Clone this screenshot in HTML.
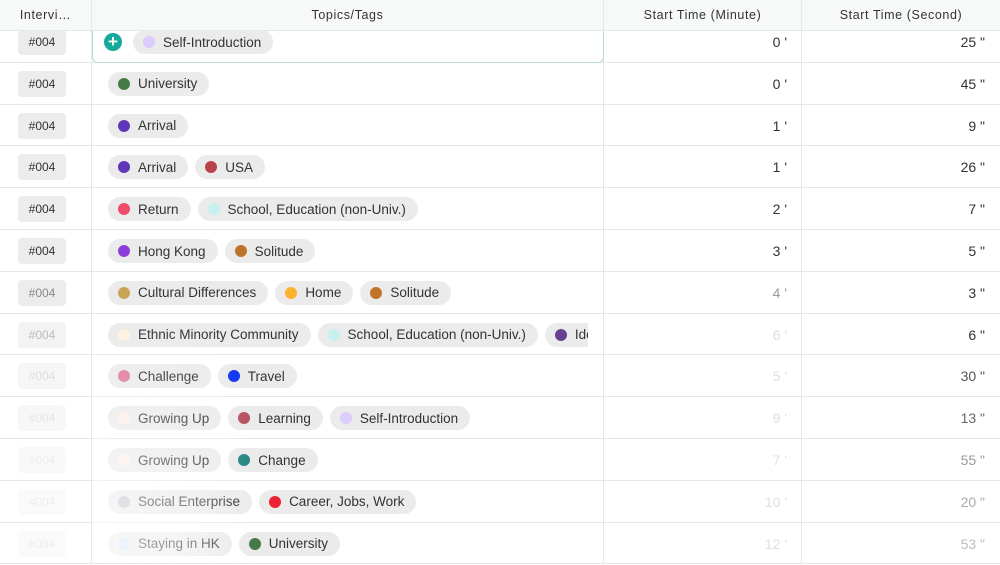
<!DOCTYPE html>
<html><head><meta charset="utf-8"><style>
*{box-sizing:border-box;margin:0;padding:0}
body{width:1000px;height:563px;overflow:hidden;background:#fff;font-family:"Liberation Sans",sans-serif;color:#333;position:relative}
.hdr{position:absolute;left:0;top:0;width:1000px;height:31px;background:#f7f8f8;border-bottom:1px solid #e3e8e8;z-index:5}
.hdr div{position:absolute;top:0;height:30px;line-height:30px;font-size:12.5px;letter-spacing:0.6px;color:#333;text-align:center;border-right:1px solid #e3e8e8}
.row{position:absolute;left:0;width:1000px;height:41.8px;border-bottom:1px solid #e3e8e8}
.vl{position:absolute;top:0;bottom:0;width:1px;background:#e3e8e8;z-index:4}
.id{position:absolute;left:18px;top:8px;width:48px;height:26px;border-radius:4px;background:#ececec;font-size:12px;line-height:26px;text-align:center;color:#333}
.tags{position:absolute;left:108px;top:9px;width:480px;height:24px;display:flex;gap:7px;overflow:hidden;white-space:nowrap}
.chip{height:24px;border-radius:12px;background:#ebebeb;display:flex;align-items:center;padding:0 12px 0 10px;font-size:13.5px;color:#333;flex-shrink:0}
.dot{width:12px;height:12px;border-radius:50%;margin-right:8px}
.min{position:absolute;left:604px;width:183px;top:1px;height:41px;line-height:41px;text-align:right;font-size:14px}
.sec{position:absolute;left:802px;width:183px;top:1px;height:41px;line-height:41px;text-align:right;font-size:14px}
.fade{position:absolute;left:93px;top:320px;width:160px;height:243px;z-index:3;background:linear-gradient(to right,rgba(255,255,255,0.65),rgba(255,255,255,0.45) 60%,rgba(255,255,255,0));-webkit-mask-image:linear-gradient(to bottom,transparent 0%,#000 90%);mask-image:linear-gradient(to bottom,transparent 0%,#000 90%)}
</style></head><body>
<div class="hdr">
<div style="left:0;width:92px">Intervi…</div>
<div style="left:92px;width:512px">Topics/Tags</div>
<div style="left:604px;width:198px">Start Time (Minute)</div>
<div style="left:802px;width:198px;border-right:none">Start Time (Second)</div>
</div>
<div class="vl" style="left:91px"></div><div class="vl" style="left:603px"></div><div class="vl" style="left:801px"></div>

<div class="row" style="top:21px">
<div class="id">#004</div>
<div style="position:absolute;left:92px;top:0;width:512px;height:42px;border:1px solid #b9dcd8;border-radius:0 0 6px 6px;border-top:none;z-index:4"></div>
<div style="position:absolute;left:104px;top:12px;width:18px;height:18px;border-radius:50%;background:#17aa9c;color:#fff;font-size:17px;line-height:18px;text-align:center;font-weight:bold;z-index:5">+</div>
<div class="tags" style="left:133px"><span class="chip"><span class="dot" style="background:#dcccfb"></span>Self-Introduction</span></div>
<div class="min">0 '</div><div class="sec">25 "</div></div>

<div class="row" style="top:62.8px"><div class="id">#004</div>
<div class="tags"><span class="chip"><span class="dot" style="background:#437a45"></span>University</span></div>
<div class="min">0 '</div><div class="sec">45 "</div></div>

<div class="row" style="top:104.6px"><div class="id">#004</div>
<div class="tags"><span class="chip"><span class="dot" style="background:#6135b8"></span>Arrival</span></div>
<div class="min">1 '</div><div class="sec">9 "</div></div>

<div class="row" style="top:146.4px"><div class="id">#004</div>
<div class="tags"><span class="chip"><span class="dot" style="background:#6135b8"></span>Arrival</span><span class="chip"><span class="dot" style="background:#b8434a"></span>USA</span></div>
<div class="min">1 '</div><div class="sec">26 "</div></div>

<div class="row" style="top:188.2px"><div class="id">#004</div>
<div class="tags"><span class="chip"><span class="dot" style="background:#ef4c6a"></span>Return</span><span class="chip"><span class="dot" style="background:#c8f0ee"></span>School, Education (non-Univ.)</span></div>
<div class="min">2 '</div><div class="sec">7 "</div></div>

<div class="row" style="top:230px"><div class="id">#004</div>
<div class="tags"><span class="chip"><span class="dot" style="background:#8e3ed8"></span>Hong Kong</span><span class="chip"><span class="dot" style="background:#c0742a"></span>Solitude</span></div>
<div class="min">3 '</div><div class="sec">5 "</div></div>

<div class="row" style="top:271.8px"><div class="id" style="color:#888">#004</div>
<div class="tags"><span class="chip"><span class="dot" style="background:#c9a456"></span>Cultural Differences</span><span class="chip"><span class="dot" style="background:#fbb22c"></span>Home</span><span class="chip"><span class="dot" style="background:#c0742a"></span>Solitude</span></div>
<div class="min" style="color:#999">4 '</div><div class="sec">3 "</div></div>

<div class="row" style="top:313.6px"><div class="id" style="color:#bbb;background:#f3f3f3">#004</div>
<div class="tags"><span class="chip"><span class="dot" style="background:#fdf3df"></span>Ethnic Minority Community</span><span class="chip"><span class="dot" style="background:#c8f0ee"></span>School, Education (non-Univ.)</span><span class="chip"><span class="dot" style="background:#65418f"></span>Identity</span></div>
<div class="min" style="color:#ddd">6 '</div><div class="sec">6 "</div></div>

<div class="row" style="top:355.4px"><div class="id" style="color:#ddd;background:#f6f6f6">#004</div>
<div class="tags"><span class="chip"><span class="dot" style="background:#e07aa0"></span>Challenge</span><span class="chip"><span class="dot" style="background:#0f33f5"></span>Travel</span></div>
<div class="min" style="color:#e0e0e0">5 '</div><div class="sec" style="color:#555">30 "</div></div>

<div class="row" style="top:397.2px"><div class="id" style="color:#e6e6e6;background:#f7f7f7">#004</div>
<div class="tags"><span class="chip"><span class="dot" style="background:#fdeee6"></span>Growing Up</span><span class="chip"><span class="dot" style="background:#b65060"></span>Learning</span><span class="chip"><span class="dot" style="background:#dcccfb"></span>Self-Introduction</span></div>
<div class="min" style="color:#e0e0e0">9 '</div><div class="sec" style="color:#666">13 "</div></div>

<div class="row" style="top:439px"><div class="id" style="color:#eee;background:#f9f9f9">#004</div>
<div class="tags"><span class="chip"><span class="dot" style="background:#fdeee6"></span>Growing Up</span><span class="chip"><span class="dot" style="background:#208680"></span>Change</span></div>
<div class="min" style="color:#e0e0e0">7 '</div><div class="sec" style="color:#999">55 "</div></div>

<div class="row" style="top:480.8px"><div class="id" style="color:#eee;background:#fafafa">#004</div>
<div class="tags"><span class="chip"><span class="dot" style="background:#c1c6cc"></span>Social Enterprise</span><span class="chip"><span class="dot" style="background:#ed2233"></span>Career, Jobs, Work</span></div>
<div class="min" style="color:#e0e0e0">10 '</div><div class="sec" style="color:#aaa">20 "</div></div>

<div class="row" style="top:522.6px"><div class="id" style="color:#eee;background:#fafafa">#004</div>
<div class="tags"><span class="chip"><span class="dot" style="background:#d3e2fb"></span>Staying in HK</span><span class="chip"><span class="dot" style="background:#437a45"></span>University</span></div>
<div class="min" style="color:#e0e0e0">12 '</div><div class="sec" style="color:#bbb">53 "</div></div>

<div class="fade"></div>
</body></html>
